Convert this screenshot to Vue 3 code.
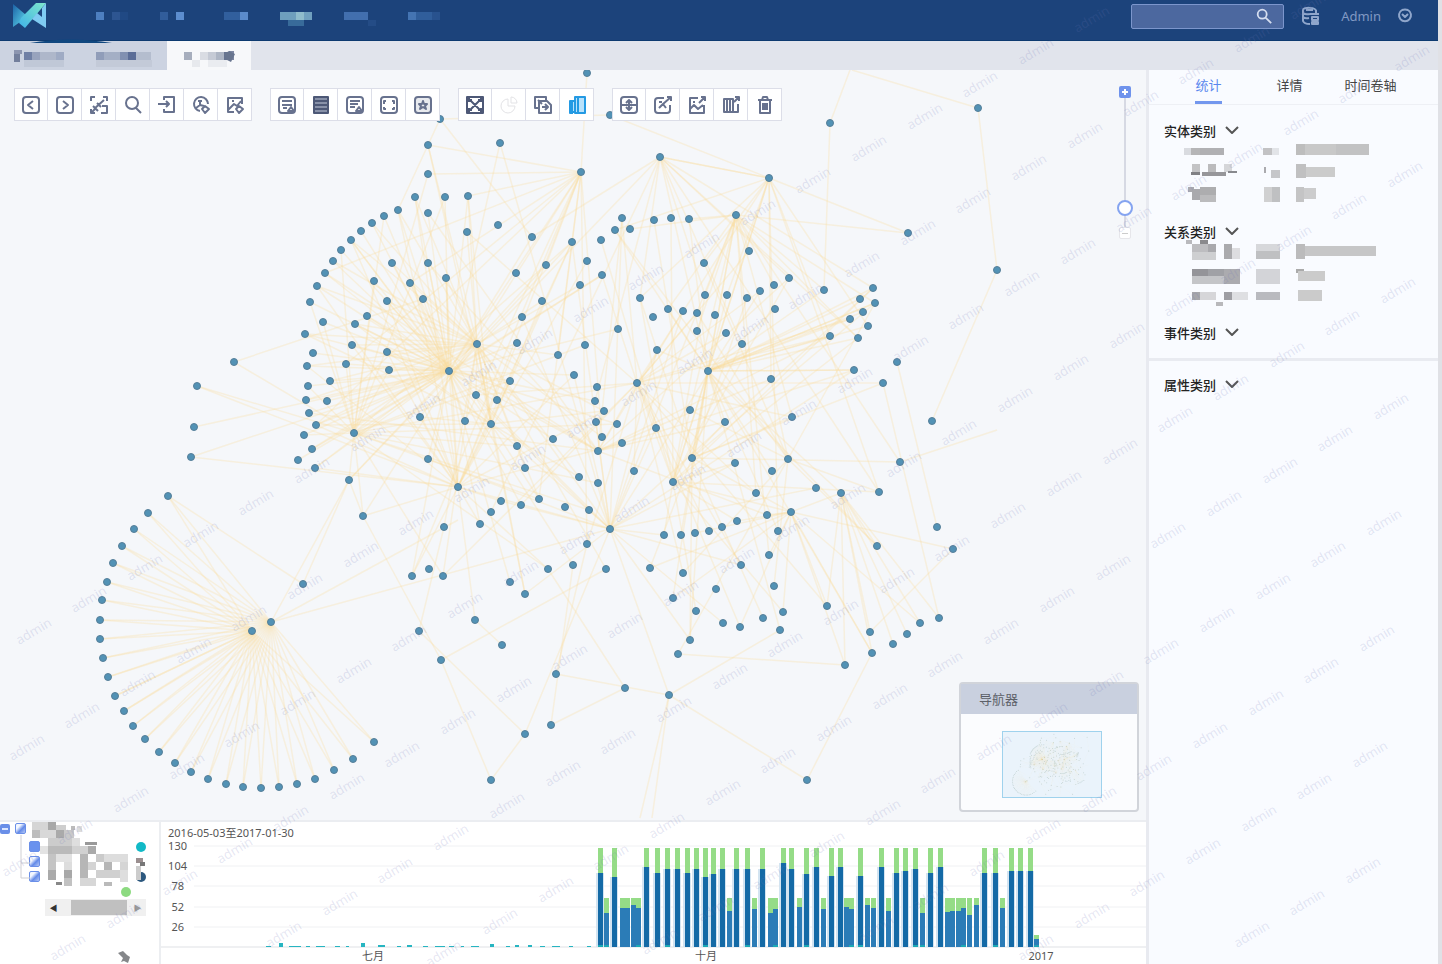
<script setup>
import { ref } from 'vue'

const keyword = ref('')
const zoom = ref(10)
const activeTab = ref(0)
const panelTabs = ['统计', '详情', '时间卷轴']

// each block: x, y, width, height, colour
const navBlocks = [
  [96, 12, 8, 8, '#4d7fc0'], [112, 12, 8, 8, '#2d5591'], [120, 12, 8, 8, '#204984'],
  [160, 12, 8, 8, '#315d9b'], [176, 12, 8, 8, '#5c8dce'],
  [224, 12, 16, 8, '#315f9d'], [240, 12, 8, 8, '#5b8bcb'],
  [280, 12, 16, 8, '#6e9fbd'], [296, 12, 8, 8, '#8fbccc'], [304, 12, 8, 8, '#70a0bf'], [288, 20, 16, 6, '#386b9a'],
  [344, 12, 24, 8, '#426fae'], [368, 20, 8, 6, '#244c86'],
  [408, 12, 8, 8, '#4474b2'], [416, 12, 16, 8, '#305e9b'], [432, 12, 8, 8, '#28528e']
]
const tabBlocks = [
  [14, 50, 8, 4, '#8d96b0'], [14, 54, 6, 8, '#737f9c'], [24, 52, 8, 8, '#7080a5'], [32, 52, 8, 8, '#98a3bd'],
  [40, 52, 16, 8, '#aeb7ca'], [56, 52, 8, 8, '#9fabc4'], [24, 60, 40, 7, '#c0c8d7'],
  [96, 52, 8, 8, '#909db9'], [104, 52, 16, 8, '#a4afc5'], [120, 52, 8, 8, '#8190b1'], [128, 52, 8, 8, '#5b6d97'],
  [136, 52, 15, 8, '#b4bdce'], [96, 60, 56, 7, '#c3cad8'],
  [184, 52, 8, 8, '#a7aebd'], [192, 60, 8, 7, '#e7e9ed'], [200, 52, 8, 8, '#d9dce3'], [208, 52, 8, 8, '#c5cad5'],
  [216, 52, 8, 8, '#adb5c4'], [224, 52, 5, 8, '#667390'], [229, 51, 5, 9, '#7d87a2'], [208, 60, 19, 7, '#eaecf0']
]
const entityBlocks = [
  [20, 5, 7, 7, '#d9dbe0'], [27, 5, 9, 7, '#b5b5b7'], [36, 5, 24, 7, '#b0b0b3'], [99, 5, 9, 7, '#c2c2c4'], [108, 5, 7, 7, '#e2e4e8'],
  [132, 1, 9, 11, '#bdbdbd'], [141, 1, 31, 11, '#c8c8c8'], [172, 1, 33, 11, '#c2c2c3'],
  [28, 21, 8, 8, '#c3c3c5'], [44, 21, 8, 8, '#bbbbbd'], [60, 21, 8, 8, '#d5d6d9'], [27, 29, 9, 3, '#808084'], [38, 29, 24, 4, '#96969a'],
  [64, 28, 9, 2, '#88898e'], [100, 24, 2, 6, '#aaaaae'], [107, 27, 9, 8, '#c5c6c9'],
  [132, 21, 10, 14, '#c0c0c1'], [142, 24, 29, 10, '#cbcbcb'],
  [24, 44, 6, 5, '#aaaab0'], [28, 46, 8, 11, '#a9a9ad'], [36, 44, 16, 8, '#adadaf'], [36, 52, 16, 7, '#bbbbbd'],
  [100, 44, 8, 15, '#d0d0d1'], [108, 44, 8, 15, '#bfc0c2'], [132, 44, 8, 15, '#c4c4c5'], [140, 45, 12, 11, '#cccccd']
]
const relationBlocks = [
  [22, 0, 6, 4, '#b9b9bd'], [36, 0, 8, 4, '#8a8a8d'], [28, 4, 16, 8, '#bdbdc0'], [44, 4, 8, 8, '#a9a9ad'], [28, 12, 24, 8, '#cecfd1'],
  [60, 4, 8, 15, '#aaaaad'], [68, 8, 8, 11, '#dddde0'], [92, 4, 24, 7, '#d7d8db'], [92, 11, 24, 8, '#bfc0c2'],
  [132, 4, 9, 15, '#bbbbbc'], [141, 6, 71, 10, '#c6c6c7'],
  [28, 29, 16, 7, '#949499'], [44, 29, 16, 7, '#a0a1a6'], [60, 29, 16, 15, '#ababaf'], [28, 36, 32, 8, '#c4c5c8'],
  [92, 29, 24, 15, '#d3d4d8'], [132, 29, 8, 4, '#aaa'], [134, 31, 27, 10, '#cbcbcb'],
  [28, 52, 8, 8, '#a6a6aa'], [36, 52, 16, 8, '#d6d6d9'], [60, 52, 8, 8, '#9e9ea3'], [68, 52, 16, 8, '#dedfe2'],
  [52, 62, 7, 4, '#b8b8bb'], [92, 52, 24, 8, '#b9babf'], [134, 50, 24, 11, '#cbcbcb']
]
const treeBlocks = [
  [32, 0, 16, 8, '#d5d5d5'], [48, 0, 8, 8, '#a8a8a8'], [56, 3, 10, 5, '#cecece'], [32, 8, 8, 8, '#bdbdbd'], [40, 8, 16, 8, '#d8d8d8'],
  [56, 8, 8, 8, '#aaa'], [64, 8, 10, 8, '#c9c9c9'], [71, 4, 4, 4, '#bbb'], [77, 4, 5, 6, '#ddd'], [48, 16, 24, 8, '#ccc'], [72, 16, 8, 8, '#dedede'],
  [85, 20, 12, 3, '#999'], [40, 24, 8, 8, '#e3e3e3'], [48, 24, 24, 8, '#bababa'], [72, 24, 16, 8, '#d1d1d1'], [88, 24, 8, 8, '#aaa'],
  [48, 32, 8, 16, '#c4c4c4'], [56, 32, 16, 8, '#e2e2e2'], [80, 32, 8, 24, '#b6b6b6'], [96, 32, 8, 8, '#cacaca'], [104, 32, 24, 8, '#ddd'],
  [64, 40, 8, 8, '#ddd'], [88, 40, 8, 8, '#d4d4d4'], [104, 40, 8, 8, '#b6b6b6'], [120, 40, 8, 8, '#d5d5d5'],
  [48, 48, 8, 10, '#aaa'], [64, 48, 8, 8, '#a8a8a8'], [96, 48, 24, 8, '#d0d0d0'], [120, 48, 8, 12, '#dedede'],
  [64, 56, 8, 8, '#c2c2c2'], [80, 56, 16, 8, '#d7d7d7'], [104, 60, 8, 4, '#bababa'], [56, 60, 6, 3, '#888'],
  [136, 36, 7, 5, '#9b8f90'], [140, 40, 5, 4, '#777'], [136, 44, 5, 14, '#ccc']
]

const toolGroups = [
  ['prev', 'next', 'fit', 'find', 'enter', 'eye', 'picture'],
  ['chart', 'rows', 'note', 'brackets', 'star'],
  ['nodes', 'pie', 'copy', 'panes'],
  ['hub', 'share', 'imageOut', 'listOut', 'trash']
]
const box = 'M5 2H15Q18 2 18 5V15Q18 18 15 18H5Q2 18 2 15V5Q2 2 5 2Z'
const icons = {
  prev: box + 'M12 6L7 10L12 14',
  next: box + 'M8 6L13 10L8 14',
  fit: 'M2 6V2H6M14 2H18V6M2 14V18H6M12 18H18V11H13M5 14L15 5M4 11L9 16M8 8L12 12M3 17L7 13',
  find: 'M15 8A6 6 0 1 1 3 8A6 6 0 0 1 15 8M13 13L18 18',
  enter: 'M7 5V2H17V17H7V14M1 9H12M9 6L12 9L9 12',
  eye: 'M17 9A7 7 0 1 0 9 16M9 6V10L5 13M9 10L13 11M11 14L14 11L18 14L14 18ZM7 6H11',
  picture: 'M9 17H3V3H17V9M3 15L9 9L12 11L16 6M11 14L14 11L18 14L14 18ZM7 6H9',
  chart: box + 'M5 6H15M5 10H15M6 13H10M11 16L14 12L17 16Z',
  rows: 'M3 2H17V18H3ZM3 6H17M3 10H17M3 14H17',
  note: box + 'M5 6H15M5 9H13M5 12H10M11 16L14 12L17 16Z',
  brackets: box + 'M7 6H5V9M13 6H15V9M5 12V14H7M15 12V14H13',
  star: box + 'M10 6L11 9H14L12 11L13 14L10 12L7 14L8 11L6 9H9Z',
  nodes: 'M2 2H18V18H2ZM5 5L15 15M15 5L5 15M4 3V7M16 3V7M4 13V17M16 13V17M3 5H7M13 5H17M3 15H7M13 15H17',
  pie: 'M9 4A7 7 0 1 0 16 11H9ZM12 2A6 6 0 0 1 18 8H12Z',
  copy: 'M13 5V2H2V13H6M6 6H14L18 10V18H6ZM9 12H15M12 9L15 12L12 15M5 5L9 9',
  panes: 'M8 2H18V18H8ZM8 6H3V17H8M5 7V17M11 3V17M3 12V18H6',
  hub: box + 'M10 5V15M3 10H17M7 8L10 5L13 8M7 12L10 15L13 12',
  share: 'M11 3H5Q2 3 2 6V15Q2 18 5 18H14Q17 18 17 15V10M6 13L10 9L13 13M10 9L18 2M14 2H18V6M6 7H9',
  imageOut: 'M11 3H3V18H17V10M3 14L7 10L11 14L16 10M12 8L18 2M14 2H18V6M6 7H8',
  listOut: 'M3 4H12V17H3ZM6 4V17M9 4V17M12 17H17V9M13 7L18 2M14 2H18V6',
  trash: 'M3 5H17M5 5V18H15V5M7 5L8 2H12L13 5M8 8V15M10 8V15M12 8V15'
}

const fan = [
  [168, 496], [148, 513], [134, 529], [122, 546], [113, 563], [107, 582], [102, 600], [100, 620], [100, 639], [103, 658],
  [108, 677], [115, 696], [124, 711], [133, 726], [145, 739], [159, 752], [175, 763], [191, 772], [208, 779], [226, 784],
  [243, 787], [261, 788], [279, 787], [297, 784], [315, 779], [334, 770], [353, 759], [374, 742]
]
const arc = [
  [415, 197], [445, 197], [468, 196], [428, 213], [398, 210], [384, 216], [372, 223], [361, 231], [351, 240], [341, 250],
  [333, 261], [325, 273], [317, 286], [310, 302], [305, 334], [313, 353], [307, 366], [308, 386], [306, 400], [309, 413],
  [316, 425], [304, 435], [312, 449], [298, 460], [315, 468], [323, 322], [355, 324], [367, 316], [352, 345], [346, 364],
  [330, 381], [327, 401], [387, 352], [389, 370], [392, 263], [428, 263], [446, 278], [374, 281], [410, 283], [423, 299], [387, 301]
]
const left = [
  [500, 143], [428, 145], [428, 174], [581, 172], [467, 232], [498, 225], [532, 237], [572, 242], [516, 273], [546, 265],
  [580, 285], [587, 261], [602, 275], [542, 301], [522, 317], [517, 343], [558, 355], [585, 345], [618, 329], [420, 417],
  [354, 433], [428, 459], [349, 480], [363, 516], [458, 487], [477, 344], [449, 371], [510, 381], [476, 395], [497, 400],
  [465, 421], [491, 424], [517, 446], [553, 439], [525, 468], [501, 501], [521, 505], [539, 499], [491, 512], [480, 524],
  [444, 527], [565, 507], [589, 510], [610, 529], [587, 544], [573, 565], [606, 569], [548, 569], [510, 582], [525, 594],
  [429, 569], [412, 576], [443, 576], [597, 387], [595, 401], [604, 411], [596, 422], [617, 424], [602, 437], [622, 443],
  [598, 451], [579, 477], [598, 483], [574, 375]
]
const right = [
  [601, 240], [615, 230], [630, 229], [622, 218], [654, 220], [671, 218], [689, 219], [637, 383], [634, 471], [656, 428],
  [690, 410], [725, 422], [708, 371], [673, 482], [692, 458], [735, 463], [772, 471], [788, 459], [792, 417], [771, 379],
  [742, 344], [657, 350], [697, 331], [726, 333], [653, 317], [640, 298], [668, 309], [683, 311], [697, 313], [715, 315],
  [705, 295], [727, 295], [747, 298], [760, 291], [774, 285], [789, 278], [775, 309], [704, 263], [749, 251], [736, 215],
  [769, 178], [660, 157], [824, 290], [830, 336], [860, 299], [873, 288], [875, 303], [863, 312], [850, 319], [868, 326],
  [858, 338], [854, 370], [897, 362], [883, 383], [900, 462], [879, 492], [841, 493], [816, 488], [756, 493], [767, 515],
  [791, 512], [778, 531], [769, 555], [741, 565], [774, 586], [783, 612], [780, 630], [763, 618], [740, 627], [723, 623],
  [696, 611], [673, 598], [716, 589], [683, 573], [650, 568], [664, 535], [681, 535], [695, 533], [709, 531], [722, 527],
  [737, 521], [690, 640], [678, 654], [827, 606], [845, 665], [870, 632], [872, 653], [893, 644], [907, 634], [920, 623],
  [939, 618], [877, 546]
]
const outer = [
  [252, 631], [271, 622], [303, 584], [475, 620], [419, 631], [441, 660], [502, 645], [556, 674], [551, 725], [525, 734],
  [491, 780], [625, 688], [669, 695], [807, 780], [932, 421], [953, 549], [937, 527], [587, 73], [440, 119], [610, 115],
  [830, 123], [978, 108], [908, 233], [997, 270], [234, 362], [197, 386], [194, 427], [191, 457]
]
const nodes = [...fan, ...arc, ...left, ...right, ...outer]

const edges = []
const link = (hub, targets, every = 1, start = 0) => {
  for (let i = start; i < targets.length; i += every) {
    edges.push([...hub, ...targets[i]])
  }
}
link([252, 631], fan)
link([271, 622], fan)
link([449, 371], arc)
link([477, 344], arc, 2)
link([449, 371], left, 3)
link([477, 344], left, 3, 1)
link([354, 433], left, 5, 2)
link([354, 433], arc, 4, 1)
link([458, 487], arc, 4)
link([458, 487], left, 4, 3)
link([491, 424], left, 6, 1)
link([491, 424], arc, 6, 2)
link([581, 172], left, 7, 2)
link([581, 172], arc, 9, 2)
link([660, 157], right.slice(20, 60), 5)
link([660, 157], left, 16, 6)
link([769, 178], right.slice(0, 64), 6, 1)
link([736, 215], right.slice(0, 64), 4, 2)
link([708, 371], right, 5, 1)
link([637, 383], right.slice(0, 84), 5, 3)
link([637, 383], left, 8, 4)
link([673, 482], right.slice(0, 84), 5)
link([610, 529], right.slice(0, 84), 6, 3)
link([610, 529], left, 7)
link([692, 458], right.slice(0, 84), 7, 4)
link([788, 459], right, 9, 1)
link([791, 512], right.slice(56), 3)
link([841, 493], right.slice(83), 1)
link([598, 451], arc, 8, 3)
link([598, 451], right.slice(0, 60), 8, 3)
link([708, 371], right.slice(42, 52))
edges.push(
  [978, 108, 997, 270], [978, 108, 852, 70], [997, 270, 932, 421], [830, 123, 824, 290], [850, 70, 830, 123],
  [897, 362, 937, 527], [883, 383, 939, 618], [587, 73, 581, 172], [610, 115, 769, 178], [769, 178, 908, 233],
  [736, 215, 908, 233], [660, 157, 769, 178], [440, 119, 398, 210], [440, 119, 532, 237], [428, 145, 581, 172],
  [440, 119, 610, 115], [234, 362, 423, 299], [197, 386, 354, 433], [234, 362, 354, 433], [194, 427, 449, 371],
  [191, 457, 449, 371], [197, 386, 458, 487], [191, 457, 458, 487], [303, 584, 349, 480], [271, 622, 349, 480],
  [271, 622, 610, 529], [271, 622, 458, 520], [363, 516, 441, 660], [363, 516, 349, 480], [354, 433, 363, 516],
  [441, 660, 491, 780], [419, 631, 444, 527], [419, 631, 525, 734], [525, 734, 610, 529], [551, 725, 625, 688],
  [551, 725, 573, 565], [556, 674, 587, 544], [669, 695, 610, 529], [669, 695, 780, 630], [669, 695, 556, 674],
  [669, 695, 640, 818], [669, 695, 652, 818], [491, 780, 525, 734], [678, 654, 845, 665], [807, 780, 669, 695],
  [807, 780, 872, 653], [845, 665, 791, 512], [953, 549, 791, 512], [953, 549, 870, 632], [900, 462, 997, 430],
  [900, 462, 692, 458], [502, 645, 475, 620], [475, 620, 458, 487], [441, 660, 606, 569], [625, 688, 548, 569],
  [168, 496, 303, 584]
)

// bar centre, top of the blue part, top of the stack
const bars = [
  [600, 873, 848], [614, 877, 848], [646, 867, 848], [657, 873, 848], [667, 869, 848], [677, 869, 848], [687, 873, 848],
  [696, 869, 848], [705, 877, 848], [713, 874, 848], [722, 869, 848], [736, 869, 848], [747, 869, 848], [762, 869, 848],
  [783, 863, 848], [791, 869, 848], [806, 874, 848], [816, 867, 848], [831, 876, 848], [840, 867, 848], [860, 876, 848],
  [881, 867, 848], [896, 873, 848], [905, 871, 848], [915, 869, 848], [930, 873, 848], [940, 867, 848], [984, 873, 848],
  [995, 873, 848], [1011, 871, 848], [1020, 871, 848], [1030, 871, 848],
  [606, 913, 898], [622, 908, 898], [627, 908, 898], [633, 905, 898], [638, 908, 898], [729, 911, 898], [754, 909, 898],
  [770, 913, 898], [775, 909, 898], [799, 907, 898], [823, 909, 898], [846, 907, 898], [851, 909, 898], [867, 905, 898],
  [873, 908, 898], [888, 911, 898], [922, 913, 898], [947, 912, 898], [952, 911, 898], [958, 911, 898], [963, 908, 898],
  [969, 915, 898], [976, 905, 898], [1002, 908, 898], [1036, 939, 935]
]
const cyanMarks = [
  [266, 5, 1], [279, 4, 4], [289, 12, 1], [306, 4, 1], [316, 9, 1], [335, 5, 1], [346, 3, 1], [361, 4, 4], [378, 7, 2],
  [397, 4, 1], [407, 5, 2], [423, 5, 1], [435, 10, 1], [449, 5, 1], [461, 3, 1], [471, 8, 1], [490, 4, 3], [506, 4, 1],
  [515, 4, 2], [528, 4, 2], [540, 5, 1], [552, 8, 1], [569, 4, 1], [587, 4, 1]
]
const axis = [[130, 846], [104, 866], [78, 886], [52, 907], [26, 927]]
const months = [['七月', 373], ['十月', 706], ['2017', 1041]]

const marks = []
for (let row = -4; row < 18; row++) {
  for (let col = -32; col < 4; col++) {
    const x = Math.round(1400 + col * 55.7 - row * 7)
    const y = Math.round(290 - col * 32.2 + row * 116)
    if (x > -10 && x < 1420 && y > 0 && y < 954) marks.push([x, y])
  }
}
</script>

<template>
  <div class="page">
    <header class="header">
      <svg class="logo" width="36" height="30" viewBox="0 0 36 30">
        <defs>
          <linearGradient id="logoA" x1="0" y1="0" x2="1" y2="1">
            <stop offset="0" stop-color="#1c62a6" />
            <stop offset="1" stop-color="#60dcef" />
          </linearGradient>
          <linearGradient id="logoB" x1="0" y1="1" x2="1" y2="0">
            <stop offset="0" stop-color="#3fb2e8" />
            <stop offset="1" stop-color="#7fe8cc" />
          </linearGradient>
        </defs>
        <path d="M1 3L14 14L8 21L1 26Z" fill="url(#logoA)" />
        <path d="M9 17L24 2H34L13 27L7 22Z" fill="url(#logoB)" />
        <path d="M34 2V27L20 18L25 12L30 16V7Z" fill="#7fcbf2" />
      </svg>
      <svg class="mosaic" width="1" height="1">
        <rect v-for="(b, i) in navBlocks" :key="i" :x="b[0]" :y="b[1]" :width="b[2]" :height="b[3]" :fill="b[4]" />
      </svg>
      <div class="user-area">
        <div class="search">
          <input v-model="keyword" type="text" aria-label="search" />
          <button aria-label="search">
            <svg width="18" height="18" viewBox="0 0 20 20"><path d="M13 8A5 5 0 1 1 3 8A5 5 0 0 1 13 8M12 12L18 18" /></svg>
          </button>
        </div>
        <button class="head-btn" aria-label="data">
          <svg width="20" height="20" viewBox="0 0 20 20">
            <path d="M15 5C15 1 2 1 2 4V15Q3 18 9 18M2 7Q4 9 9 8M2 11Q4 13 8 12M15 4V8M9 8H18M11 11H17V14H11ZM11 16H17V18H11ZM5 4H12" />
          </svg>
        </button>
        <a class="admin" href="#">Admin</a>
        <button class="head-btn power" aria-label="logout">
          <svg width="18" height="18" viewBox="0 0 18 18"><path d="M6 3A6 6 0 1 0 12 3M6 3Q9 2 12 3M6 7L9 10L12 7" /></svg>
        </button>
      </div>
    </header>

    <nav class="tabs">
      <button class="tab" aria-label="tab one"></button>
      <button class="tab current" aria-label="tab two"></button>
      <svg class="mosaic" width="1" height="1">
        <path d="M30 2Q70 -5 112 2Z" fill="#0f477f" />
        <g transform="translate(0,-41)">
          <rect v-for="(b, i) in tabBlocks" :key="i" :x="b[0]" :y="b[1]" :width="b[2]" :height="b[3]" :fill="b[4]" />
          <path d="M224 54L229 51L235 54L231 62L227 60Z" fill="#68758f" />
        </g>
      </svg>
    </nav>

    <div class="body">
      <main class="left-side">
        <section class="canvas">
          <svg class="graph" width="100%" height="100%">
            <g transform="translate(0,-70)">
              <line v-for="(e, i) in edges" :key="'e' + i" class="edge" :x1="e[0]" :y1="e[1]" :x2="e[2]" :y2="e[3]" />
              <circle v-for="(n, i) in nodes" :key="'n' + i" class="node" :cx="n[0]" :cy="n[1]" r="3.5" />
            </g>
          </svg>

          <div class="toolbar">
            <div v-for="(group, g) in toolGroups" :key="g" class="group">
              <button v-for="name in group" :key="name" :class="'tool-' + name" :aria-label="name">
                <svg width="20" height="20" viewBox="0 0 20 20"><path :d="icons[name]" /></svg>
              </button>
            </div>
          </div>

          <div class="zoomer">
            <button class="plus" aria-label="zoom in"></button>
            <input v-model="zoom" type="range" min="0" max="100" aria-label="zoom" />
            <button class="minus" aria-label="zoom out"></button>
          </div>

          <div class="navigator">
            <h3>导航器</h3>
            <div class="mini">
              <svg width="100" height="67">
                <g transform="translate(1,-4) scale(0.085)">
                  <line v-for="(e, i) in edges" :key="i" class="mini-edge" :x1="e[0]" :y1="e[1]" :x2="e[2]" :y2="e[3]" />
                  <circle v-for="(n, i) in nodes" :key="'m' + i" class="mini-node" :cx="n[0]" :cy="n[1]" r="6" />
                </g>
              </svg>
            </div>
          </div>
        </section>

        <section class="bottom">
          <div class="tree">
            <svg class="mosaic" width="1" height="1">
              <path class="tree-line" d="M21 13V56H30M21 41H30" />
            </svg>
            <div class="tree-row root">
              <button class="expand" aria-label="expand"></button>
              <input type="checkbox" checked aria-label="all" />
            </div>
            <div class="tree-row"><input type="checkbox" class="solid" checked aria-label="type one" /><i class="dot cyan"></i></div>
            <div class="tree-row"><input type="checkbox" checked aria-label="type two" /></div>
            <div class="tree-row"><input type="checkbox" checked aria-label="type three" /><i class="dot navy"></i></div>
            <div class="tree-row last"><i class="dot green"></i></div>
            <div class="scroll">
              <button aria-label="scroll left">◀</button>
              <span></span>
              <button class="dim" aria-label="scroll right">▶</button>
            </div>
            <svg class="mosaic" width="1" height="1">
              <rect v-for="(b, i) in treeBlocks" :key="i" :x="b[0]" :y="b[1]" :width="b[2]" :height="b[3]" :fill="b[4]" />
              <path d="M118 131L123 129L127 133L130 135L128 141L124 139L121 140L123 136Z" fill="#85878a" />
            </svg>
          </div>
          <div class="chart">
            <svg width="100%" height="144">
              <g transform="translate(-161,-820)">
                <text x="168" y="837">2016-05-03至2017-01-30</text>
                <g v-for="a in axis" :key="a[0]">
                  <line class="grid" x1="194" :y1="a[1]" x2="3000" :y2="a[1]" />
                  <text :x="a[0] > 100 ? 187 : 184" :y="a[1] + 4" text-anchor="end">{{ a[0] }}</text>
                </g>
                <line class="base" x1="161" y1="947" x2="3000" y2="947" />
                <rect v-for="(m, i) in cyanMarks" :key="'c' + i" :x="m[0]" :y="947 - m[2]" :width="m[1]" :height="m[2]" fill="#27b5c1" />
                <g v-for="(b, i) in bars" :key="i">
                  <rect v-if="b[2] === 848" :x="b[0] - 4" :y="b[1]" width="8" :height="947 - b[1]" fill="#d3e4f1" />
                  <rect :x="b[0] - 2" :y="b[2]" width="5" :height="b[1] - b[2]" fill="#95dc87" />
                  <rect :x="b[0] - 2" :y="b[1]" width="5" :height="947 - b[1]" :fill="b[2] === 848 ? '#146aa6' : '#2b7cb7'" />
                  <rect v-if="i % 4 === 0" :x="b[0] - 2" y="945" width="5" height="2" fill="#1ba9b5" />
                </g>
                <text v-for="m in months" :key="m[0]" :x="m[1]" y="960" text-anchor="middle">{{ m[0] }}</text>
              </g>
            </svg>
          </div>
        </section>
      </main>

      <aside class="panel">
        <div class="panel-tabs">
          <button v-for="(t, i) in panelTabs" :key="t" :class="{ active: activeTab === i }" @click="activeTab = i"><span>{{ t }}</span></button>
        </div>
        <div class="cat">
          <h4>实体类别 <svg width="14" height="9" viewBox="0 0 14 9"><path d="M1 1L7 7L13 1" /></svg></h4>
          <svg class="stats" width="274" height="60">
            <rect v-for="(b, i) in entityBlocks" :key="i" :x="b[0]" :y="b[1]" :width="b[2]" :height="b[3]" :fill="b[4]" />
          </svg>
        </div>
        <div class="cat">
          <h4>关系类别 <svg width="14" height="9" viewBox="0 0 14 9"><path d="M1 1L7 7L13 1" /></svg></h4>
          <svg class="stats relation" width="274" height="68">
            <rect v-for="(b, i) in relationBlocks" :key="i" :x="b[0]" :y="b[1]" :width="b[2]" :height="b[3]" :fill="b[4]" />
          </svg>
        </div>
        <div class="cat single">
          <h4>事件类别 <svg width="14" height="9" viewBox="0 0 14 9"><path d="M1 1L7 7L13 1" /></svg></h4>
        </div>
        <div class="cat single attr">
          <h4>属性类别 <svg width="14" height="9" viewBox="0 0 14 9"><path d="M1 1L7 7L13 1" /></svg></h4>
        </div>
      </aside>
    </div>

    <svg class="watermark" width="100%" height="100%" aria-hidden="true">
      <text v-for="(m, i) in marks" :key="i" text-anchor="middle" :transform="`translate(${m[0]},${m[1] + 4}) rotate(-31)`">admin</text>
    </svg>
  </div>
</template>

<style>
body {
  margin: 0;
}
</style>

<style scoped>
.page {
  position: relative;
  display: flex;
  flex-direction: column;
  height: 100vh;
  box-sizing: border-box;
  border-right: 4px solid #e0e1e6;
  overflow: hidden;
  background: #f5f7fa;
  font-family: "Noto Sans", "Noto Sans CJK SC", sans-serif;
  font-size: 13px;
  color: #333;
}

button {
  appearance: none;
  border: none;
  padding: 0;
  margin: 0;
  background: none;
  font: inherit;
  color: inherit;
  cursor: pointer;
}

svg {
  display: block;
}

path {
  stroke-linejoin: round;
}

.mosaic {
  position: absolute;
  top: 0;
  left: 0;
  overflow: visible;
  pointer-events: none;
}

.header {
  position: relative;
  flex: none;
  display: flex;
  align-items: center;
  justify-content: space-between;
  height: 41px;
  box-sizing: border-box;
  padding: 0 24px 8px 12px;
  background: #1c437b;
  border-bottom: 1px solid #0d3a70;
}

.user-area {
  display: flex;
  align-items: center;
}

.search {
  display: flex;
  width: 153px;
  height: 25px;
  box-sizing: border-box;
  border: 1px solid #7c96cc;
  border-radius: 2px;
  background: #4c689f;
}

.search input {
  flex: 1;
  min-width: 0;
  border: none;
  outline: none;
  background: none;
  color: #fff;
}

.search button {
  padding-right: 10px;
}

.user-area path {
  fill: none;
  stroke: #8fa6cb;
  stroke-width: 2;
}

.user-area .search path {
  stroke: #d5def0;
}

.head-btn {
  margin-left: 17px;
}

.admin {
  margin-left: 20px;
  color: #8099c3;
  text-decoration: none;
}

.power {
  margin-left: 15px;
}

.tabs {
  position: relative;
  flex: none;
  display: flex;
  height: 29px;
  background: #e1e4ec;
}

.tab {
  width: 167px;
  background: #ccd3e1;
}

.tab.current {
  width: 84px;
  background: #f7f8fa;
}

.body {
  flex: 1;
  display: flex;
  min-height: 0;
}

.left-side {
  flex: 1;
  min-width: 0;
  display: flex;
  flex-direction: column;
}

.canvas {
  position: relative;
  flex: 1;
  overflow: hidden;
  padding: 18px 14px;
}

.graph {
  position: absolute;
  inset: 0;
}

.edge {
  stroke: #fbdb94;
  stroke-opacity: 0.27;
  stroke-width: 1.5;
}

.node {
  fill: #5292b5;
  stroke: #567f98;
  stroke-width: 1;
}

.toolbar {
  position: relative;
  display: flex;
  gap: 18px;
}

.group {
  display: flex;
  height: 33px;
  box-sizing: border-box;
  border: 1px solid #dcdee8;
  border-width: 1px 0;
  background: #fff;
}

.group button {
  display: flex;
  align-items: center;
  justify-content: center;
  width: 34px;
  box-sizing: border-box;
  border-right: 1px solid #dcdee8;
}

.group button:first-child {
  border-left: 1px solid #dcdee8;
}

.group path {
  fill: none;
  stroke: #68728e;
  stroke-width: 2;
}

.group .tool-nodes path,
.group .tool-rows path {
  stroke: #4d5876;
}

.group .tool-rows path {
  fill: #8891a8;
}

.group .tool-star path {
  fill: #68728e;
  fill-opacity: 0.15;
}

.group .tool-pie path {
  stroke: #e3e3e6;
  stroke-width: 1;
}

.group .tool-panes path {
  stroke: #249ae3;
  fill: #b9e2fb;
}

.zoomer {
  position: absolute;
  top: 16px;
  right: 13px;
  display: flex;
  flex-direction: column;
  align-items: center;
  width: 16px;
}

.zoomer input {
  appearance: none;
  writing-mode: vertical-lr;
  direction: rtl;
  width: 16px;
  height: 129px;
  margin: 0;
  background: linear-gradient(#d6d9e3, #d6d9e3) center / 2px 100% no-repeat;
}

.zoomer input::-webkit-slider-thumb {
  appearance: none;
  width: 16px;
  height: 16px;
  box-sizing: border-box;
  border: 2px solid #85a4f0;
  border-radius: 50%;
  background: #fff;
}

.plus,
.minus {
  width: 12px;
  height: 12px;
  border-radius: 2px;
  background: linear-gradient(#fff, #fff) center / 6px 2px no-repeat, linear-gradient(#fff, #fff) center / 2px 6px no-repeat, #6f93ec;
}

.minus {
  background: linear-gradient(#ccc, #ccc) center / 6px 1px no-repeat, #fff;
  border: 1px solid #e6e6ea;
}

.navigator {
  position: absolute;
  right: 7px;
  bottom: 8px;
  width: 180px;
  height: 130px;
  box-sizing: border-box;
  border: 2px solid #d1d4da;
  border-radius: 4px;
  background: #fbfcfe;
}

.navigator h3 {
  margin: 0;
  padding-left: 18px;
  line-height: 30px;
  font-size: 13px;
  font-weight: 400;
  color: #5c6068;
  background: #c9d0df;
}

.mini {
  width: 100px;
  height: 67px;
  box-sizing: border-box;
  margin: 17px 0 0 41px;
  border: 1px solid #9fd2ed;
  background: #eaf3fb;
}

.mini-edge {
  stroke: #fbd98c;
  stroke-opacity: 0.12;
  stroke-width: 3;
}

.mini-node {
  fill: #7d9e94;
  fill-opacity: 0.35;
}

.bottom {
  flex: none;
  display: flex;
  height: 144px;
  border-top: 2px solid #ebedf1;
  box-sizing: border-box;
  background: #fff;
}

.tree {
  position: relative;
  flex: none;
  width: 161px;
  box-sizing: border-box;
  border-right: 2px solid #eceef1;
}

.tree-line {
  fill: none;
  stroke: #cfcfd4;
}

.tree-row {
  display: flex;
  align-items: center;
  height: 15px;
  padding: 0 13px 0 29px;
}

.tree-row.root {
  height: 13px;
  padding: 0;
  margin-bottom: 4px;
  gap: 5px;
}

.tree-row input {
  appearance: none;
  width: 11px;
  height: 11px;
  margin: 0;
  border: 1px solid #6a8fe8;
  box-sizing: border-box;
  border-radius: 2px;
  background: linear-gradient(135deg, #f3f7ff 30%, #638ae8 60%, #b8caf6);
}

.tree-row .solid {
  background: #6a92ee;
}

.expand {
  width: 10px;
  height: 10px;
  border-radius: 2px;
  background: linear-gradient(#dce6ff, #dce6ff) center / 6px 2px no-repeat, #6a8fe8;
}

.dot {
  width: 10px;
  height: 10px;
  margin-left: auto;
  border-radius: 50%;
}

.cyan {
  background: #12b9c6;
}

.navy {
  background: #2c587e;
}

.tree-row.last {
  padding-right: 28px;
}

.green {
  background: #8cda80;
}

.scroll {
  display: flex;
  align-items: center;
  height: 17px;
  margin: 0 13px 0 45px;
  background: #f0f0f0;
}

.scroll span {
  width: 56px;
  height: 15px;
  margin: 0 auto 0 9px;
  background: #c0c0c0;
}

.scroll button {
  width: 17px;
  font-size: 8px;
  line-height: 17px;
  color: #333;
}

.scroll .dim {
  color: #999;
}

.chart {
  flex: 1;
  min-width: 0;
  overflow: hidden;
  margin-top: -2px;
}

.chart text {
  font-size: 11px;
  fill: #555;
}

.grid {
  stroke: #f0f1f3;
}

.base {
  stroke: #dfe1e5;
}

.panel {
  flex: none;
  width: 292px;
  box-sizing: border-box;
  border-left: 3px solid #e8eaf0;
  background: #f9fbff;
}

.panel-tabs {
  display: flex;
  height: 35px;
  box-sizing: border-box;
  padding-left: 19px;
  border-bottom: 1px solid #eef0f5;
}

.panel-tabs button {
  width: 81px;
  color: #444;
}

.panel-tabs span {
  display: inline-block;
  line-height: 31px;
  border-bottom: 3px solid transparent;
}

.panel-tabs .active {
  color: #5a87ee;
}

.panel-tabs .active span {
  border-bottom-color: #7397ee;
}

.cat {
  height: 101px;
  padding-left: 15px;
}

.panel-tabs + .cat {
  padding-top: 15px;
}

.cat h4 {
  display: flex;
  align-items: center;
  gap: 9px;
  margin: 0;
  height: 20px;
  font-size: 13px;
  font-weight: 500;
  color: #222;
}

.cat h4 path {
  fill: none;
  stroke: #555;
  stroke-width: 2;
}

.stats {
  margin-top: 3px;
}

.relation {
  margin-top: -1px;
}

.cat.single {
  height: 36px;
  border-bottom: 3px solid #e9ebf1;
}

.cat.attr {
  padding-top: 13px;
  border: none;
}

.watermark {
  position: absolute;
  inset: 0;
  pointer-events: none;
}

.watermark text {
  font-size: 13px;
  fill: #6c76b8;
  fill-opacity: 0.18;
}
</style>
